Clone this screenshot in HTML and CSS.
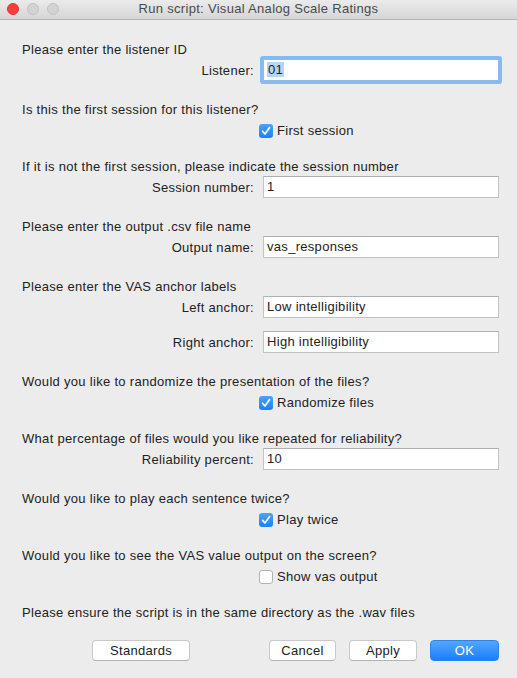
FILE: index.html
```html
<!DOCTYPE html>
<html>
<head>
<meta charset="utf-8">
<link rel="stylesheet" href="styles.css">
</head>
<body>
<div class="window">
  <div class="titlebar">
    <div class="lights">
      <span class="light red"></span>
      <span class="light grey"></span>
      <span class="light grey"></span>
    </div>
    <div class="title">Run script: Visual Analog Scale Ratings</div>
  </div>
  <div class="content">
    <section class="sec">
      <div class="heading">Please enter the listener ID</div>
      <div class="field">
        <label class="label">Listener:</label>
        <div class="input focused"><span class="sel">01</span></div>
      </div>
    </section>
    <section class="sec">
      <div class="heading">Is this the first session for this listener?</div>
      <div class="check">
        <span class="box checked"><svg viewBox="0 0 14 14" width="14" height="14"><path d="M3.6 7.4 L6 10 L10.6 3.6" fill="none" stroke="#fff" stroke-width="1.7" stroke-linecap="round" stroke-linejoin="round"/></svg></span>
        <span class="check-label">First session</span>
      </div>
    </section>
    <section class="sec">
      <div class="heading">If it is not the first session, please indicate the session number</div>
      <div class="field">
        <label class="label">Session number:</label>
        <div class="input">1</div>
      </div>
    </section>
    <section class="sec">
      <div class="heading">Please enter the output .csv file name</div>
      <div class="field">
        <label class="label">Output name:</label>
        <div class="input">vas_responses</div>
      </div>
    </section>
    <section class="sec">
      <div class="heading">Please enter the VAS anchor labels</div>
      <div class="field">
        <label class="label">Left anchor:</label>
        <div class="input">Low intelligibility</div>
      </div>
      <div class="field next">
        <label class="label">Right anchor:</label>
        <div class="input">High intelligibility</div>
      </div>
    </section>
    <section class="sec">
      <div class="heading">Would you like to randomize the presentation of the files?</div>
      <div class="check">
        <span class="box checked"><svg viewBox="0 0 14 14" width="14" height="14"><path d="M3.6 7.4 L6 10 L10.6 3.6" fill="none" stroke="#fff" stroke-width="1.7" stroke-linecap="round" stroke-linejoin="round"/></svg></span>
        <span class="check-label">Randomize files</span>
      </div>
    </section>
    <section class="sec">
      <div class="heading">What percentage of files would you like repeated for reliability?</div>
      <div class="field">
        <label class="label">Reliability percent:</label>
        <div class="input">10</div>
      </div>
    </section>
    <section class="sec">
      <div class="heading">Would you like to play each sentence twice?</div>
      <div class="check">
        <span class="box checked"><svg viewBox="0 0 14 14" width="14" height="14"><path d="M3.6 7.4 L6 10 L10.6 3.6" fill="none" stroke="#fff" stroke-width="1.7" stroke-linecap="round" stroke-linejoin="round"/></svg></span>
        <span class="check-label">Play twice</span>
      </div>
    </section>
    <section class="sec">
      <div class="heading">Would you like to see the VAS value output on the screen?</div>
      <div class="check">
        <span class="box"></span>
        <span class="check-label">Show vas output</span>
      </div>
    </section>
    <section class="sec">
      <div class="heading">Please ensure the script is in the same directory as the .wav files</div>
    </section>
    <div class="buttons">
      <button class="btn standards">Standards</button>
      <div class="right">
        <button class="btn cancel">Cancel</button>
        <button class="btn apply">Apply</button>
        <button class="btn ok">OK</button>
      </div>
    </div>
  </div>
</div>
</body>
</html>
```

FILE: styles.css
```css
* { box-sizing: border-box; }
html, body {
  margin: 0;
  padding: 0;
  background: #ececec;
}
body {
  font-family: "Liberation Sans", Arial, sans-serif;
  font-size: 13px;
  letter-spacing: 0.3px;
  color: #222;
}
.window {
  width: 517px;
  height: 678px;
  background: #ececec;
  overflow: hidden;
}
.titlebar {
  position: relative;
  height: 20px;
  background: linear-gradient(#ebebeb, #d6d6d6);
  border-bottom: 1px solid #b4b4b4;
  display: flex;
  align-items: center;
  justify-content: center;
}
.lights {
  position: absolute;
  left: 7px;
  top: 3px;
  display: flex;
  gap: 8px;
}
.light {
  width: 12px;
  height: 12px;
  border-radius: 50%;
  display: block;
}
.light.red {
  background: #fc3d39;
  border: 1px solid #e2342f;
}
.light.grey {
  background: #d3d3d3;
  border: 1px solid #c1c1c1;
}
.title {
  color: #4a4a4a;
  font-size: 13px;
  line-height: 16px;
  margin-top: -1px;
}
.content {
  padding: 21px 18px 0 22px;
  display: flex;
  flex-direction: column;
  gap: 20px;
}
.sec {
  display: flex;
  flex-direction: column;
}
.heading {
  line-height: 16px;
  height: 16px;
  white-space: nowrap;
  padding-top: 1px;
}
.field {
  display: grid;
  grid-template-columns: 1fr 236px;
  column-gap: 9px;
  align-items: center;
  margin-top: 2px;
  height: 22px;
}
.field.next {
  margin-top: 13px;
}
.label {
  text-align: right;
  white-space: nowrap;
}
.input {
  height: 22px;
  background: #fff;
  border: 1px solid #c3c3c3;
  border-top-color: #b0b0b0;
  padding: 0 3px;
  line-height: 20px;
  white-space: nowrap;
}
.input.focused {
  box-shadow: 0 0 0 3px #86baf2;
  border-color: #8fb8e8;
  border-radius: 1px;
}
.sel {
  background: #b5d5fd;
  display: inline-block;
  line-height: 15px;
  padding: 0 1px;
}
.check {
  display: flex;
  align-items: center;
  margin-top: 7px;
  height: 14px;
  margin-left: 237px;
  gap: 4px;
}
.box {
  width: 14px;
  height: 14px;
  border-radius: 3px;
  background: #fff;
  border: 1px solid #b2b2b2;
  display: block;
  flex: none;
}
.box.checked {
  border: none;
  background: linear-gradient(#4aa3fd, #1a82fb);
}
.box svg { display: block; }
.check-label {
  line-height: 16px;
  white-space: nowrap;
}
.buttons {
  display: flex;
  align-items: center;
  height: 21px;
}
.right {
  margin-left: auto;
  display: flex;
  gap: 13px;
}
.btn {
  font-family: inherit;
  font-size: 13px;
  letter-spacing: 0.3px;
  color: #222;
  height: 21px;
  line-height: 19px;
  padding: 0;
  background: #fff;
  border: 1px solid #c8c8c8;
  border-bottom-color: #b4b4b4;
  border-radius: 4px;
  text-align: center;
}
.standards { width: 98px; margin-left: 70px; }
.cancel { width: 67px; }
.apply { width: 68px; }
.ok {
  width: 69px;
  color: #fff;
  border: 1px solid #2a85f0;
  background: linear-gradient(#54a6fd, #1a7ffb);
}
```
